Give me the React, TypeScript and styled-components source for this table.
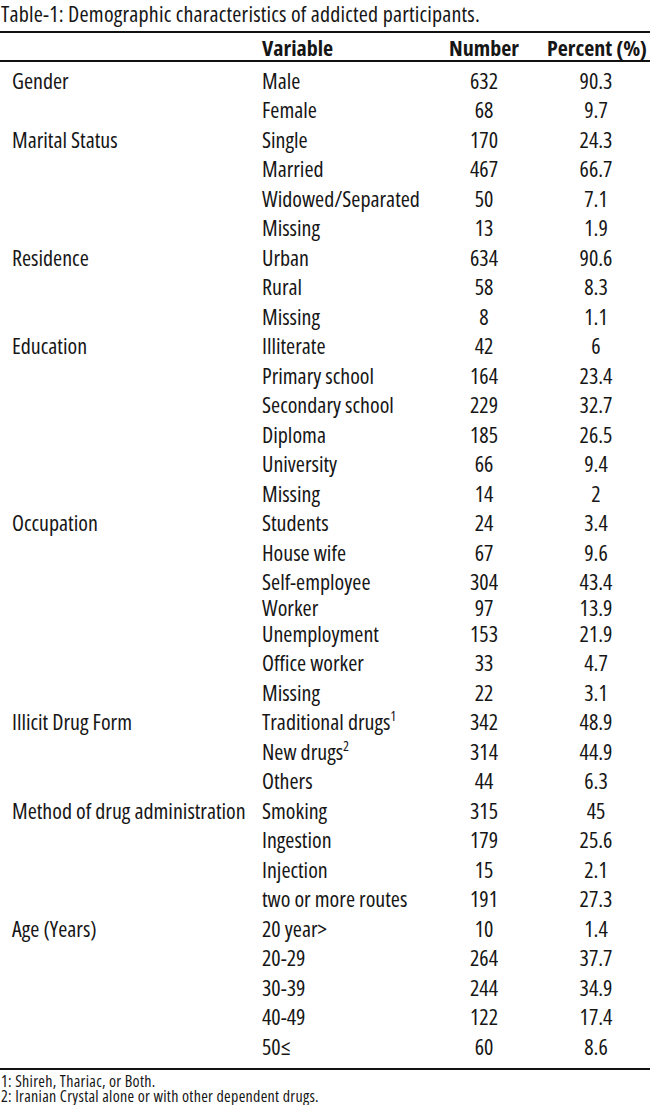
import React from 'react';
import styled, { createGlobalStyle } from 'styled-components';

const GlobalStyle = createGlobalStyle`
  html, body {
    margin: 0;
    padding: 0;
    background: #ffffff;
  }
  body {
    font-family: "Open Sans", "Liberation Sans", sans-serif;
    font-stretch: 75%;
    color: #161616;
  }
`;

const Page = styled.div`
  width: 650px;
  padding-top: 1px;
`;

const Caption = styled.div`
  font-size: 22px;
  line-height: 24px;
  height: 30px;
  padding-left: 1px;
  letter-spacing: 0.2px;
  white-space: nowrap;
`;

const Table = styled.table`
  width: 650px;
  border-collapse: collapse;
  table-layout: fixed;
  border-top: 2px solid #111;
  border-bottom: 2px solid #111;
  font-size: 22px;
`;

const HeadRow = styled.tr`
  height: 29px;
  border-bottom: 2px solid #111;
`;

interface CellProps {
  $align?: 'left' | 'center';
  $pad?: number;
}

const HeadCell = styled.th<CellProps>`
  font-weight: 700;
  text-align: ${(p) => p.$align || 'left'};
  padding: 0 0 0 ${(p) => p.$pad ?? 0}px;
  vertical-align: middle;
  white-space: nowrap;
  line-height: 24px;
`;

interface SpacerProps {
  $h: number;
}

const Spacer = styled.tr<SpacerProps>`
  height: ${(p) => p.$h}px;
`;

interface RowProps {
  $h?: number;
}

const Row = styled.tr<RowProps>`
  height: ${(p) => p.$h ?? 29.5}px;
`;

const Cell = styled.td<CellProps>`
  text-align: ${(p) => p.$align || 'left'};
  padding: 0 0 0 ${(p) => p.$pad ?? 0}px;
  vertical-align: middle;
  white-space: nowrap;
  line-height: 22px;
`;

const Sup = styled.sup`
  font-size: 14px;
  line-height: 0;
  vertical-align: 9px;
`;

const Notes = styled.div`
  font-size: 16px;
  line-height: 15.5px;
  letter-spacing: 0.3px;
  padding: 4px 0 0 1px;
  white-space: nowrap;
`;

type Item = { label: React.ReactNode; n: number; pct: string; h?: number };
type Group = { name: string; items: Item[] };

const groups: Group[] = [
  { name: 'Gender', items: [
    { label: 'Male', n: 632, pct: '90.3' },
    { label: 'Female', n: 68, pct: '9.7' },
  ] },
  { name: 'Marital Status', items: [
    { label: 'Single', n: 170, pct: '24.3' },
    { label: 'Married', n: 467, pct: '66.7' },
    { label: 'Widowed/Separated', n: 50, pct: '7.1' },
    { label: 'Missing', n: 13, pct: '1.9' },
  ] },
  { name: 'Residence', items: [
    { label: 'Urban', n: 634, pct: '90.6' },
    { label: 'Rural', n: 58, pct: '8.3' },
    { label: 'Missing', n: 8, pct: '1.1' },
  ] },
  { name: 'Education', items: [
    { label: 'Illiterate', n: 42, pct: '6' },
    { label: 'Primary school', n: 164, pct: '23.4' },
    { label: 'Secondary school', n: 229, pct: '32.7' },
    { label: 'Diploma', n: 185, pct: '26.5' },
    { label: 'University', n: 66, pct: '9.4' },
    { label: 'Missing', n: 14, pct: '2' },
  ] },
  { name: 'Occupation', items: [
    { label: 'Students', n: 24, pct: '3.4' },
    { label: 'House wife', n: 67, pct: '9.6' },
    { label: 'Self-employee', n: 304, pct: '43.4' },
    { label: 'Worker', n: 97, pct: '13.9', h: 22 },
    { label: 'Unemployment', n: 153, pct: '21.9' },
    { label: 'Office worker', n: 33, pct: '4.7' },
    { label: 'Missing', n: 22, pct: '3.1' },
  ] },
  { name: 'Illicit Drug Form', items: [
    { label: <>Traditional drugs<Sup>1</Sup></>, n: 342, pct: '48.9' },
    { label: <>New drugs<Sup>2</Sup></>, n: 314, pct: '44.9' },
    { label: 'Others', n: 44, pct: '6.3' },
  ] },
  { name: 'Method of drug administration', items: [
    { label: 'Smoking', n: 315, pct: '45' },
    { label: 'Ingestion', n: 179, pct: '25.6' },
    { label: 'Injection', n: 15, pct: '2.1' },
    { label: 'two or more routes', n: 191, pct: '27.3' },
  ] },
  { name: 'Age (Years)', items: [
    { label: '20 year>', n: 10, pct: '1.4' },
    { label: '20-29', n: 264, pct: '37.7' },
    { label: '30-39', n: 244, pct: '34.9' },
    { label: '40-49', n: 122, pct: '17.4' },
    { label: '50≤', n: 60, pct: '8.6' },
  ] },
];

export default function App() {
  return (
    <Page>
      <GlobalStyle />
      <Caption>Table-1: Demographic characteristics of addicted participants.</Caption>
      <Table>
        <colgroup>
          <col style={{ width: 262 }} />
          <col style={{ width: 172 }} />
          <col style={{ width: 100 }} />
          <col style={{ width: 116 }} />
        </colgroup>
        <thead>
          <HeadRow>
            <HeadCell />
            <HeadCell>Variable</HeadCell>
            <HeadCell $align="center">Number</HeadCell>
            <HeadCell $align="center" $pad={10}>Percent (%)</HeadCell>
          </HeadRow>
        </thead>
        <tbody>
          <Spacer $h={4} />
          {groups.map((g) =>
            g.items.map((it, i) => (
              <Row key={g.name + i} $h={it.h}>
                <Cell $pad={12}>{i === 0 ? g.name : ''}</Cell>
                <Cell>{it.label}</Cell>
                <Cell $align="center">{it.n}</Cell>
                <Cell $align="center" $pad={8}>{it.pct}</Cell>
              </Row>
            ))
          )}
          <Spacer $h={8} />
        </tbody>
      </Table>
      <Notes>
        <div>1: Shireh, Thariac, or Both.</div>
        <div>2: Iranian Crystal alone or with other dependent drugs.</div>
      </Notes>
    </Page>
  );
}
